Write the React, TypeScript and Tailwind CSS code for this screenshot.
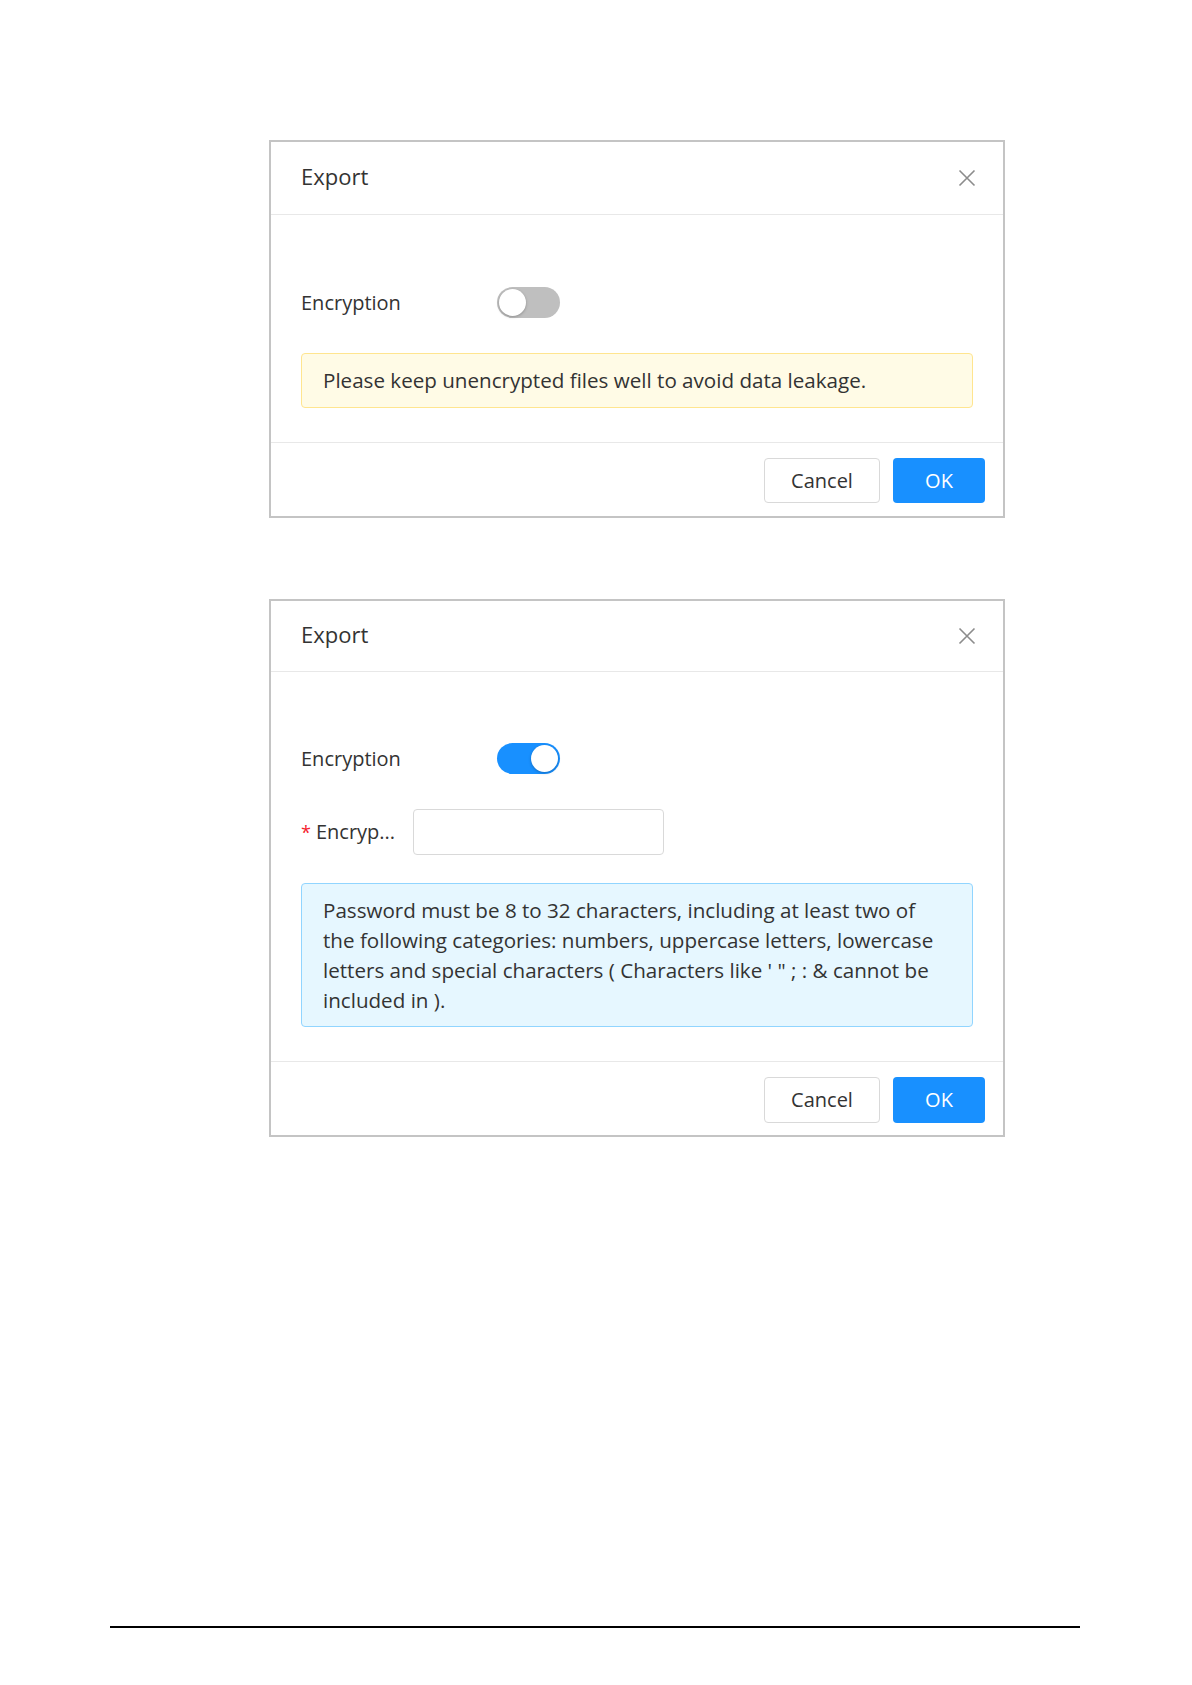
import { ReactNode } from "react";

const CloseIcon = () => (
  <svg width="18" height="18" viewBox="0 0 18 18" fill="none">
    <path d="M1.5 1.5L16.5 16.5M16.5 1.5L1.5 16.5" stroke="#8c8c8c" strokeWidth="1.6" />
  </svg>
);

function Toggle({ on }: { on?: boolean }) {
  return (
    <div
      className={`flex h-[31px] w-[63px] items-center rounded-full p-[2px] ${
        on ? "justify-end bg-[#1890ff]" : "justify-start bg-[#bfbfbf]"
      }`}
    >
      <span className="h-[27px] w-[27px] rounded-full bg-white shadow-[0_1px_3px_rgba(0,0,0,0.25)]" />
    </div>
  );
}

function Footer({ className }: { className: string }) {
  return (
    <div className={`flex justify-end gap-[13px] border-t border-[#e8e8e8] pr-[18px] ${className}`}>
      <button className="h-full w-[116px] rounded-[4px] border border-[#d9d9d9] bg-white text-[20px] text-[#333]">
        Cancel
      </button>
      <button className="h-full w-[92px] rounded-[4px] bg-[#1890ff] text-[20px] text-white">
        OK
      </button>
    </div>
  );
}

function Dialog({
  headerClass,
  children,
}: {
  headerClass: string;
  children: ReactNode;
}) {
  return (
    <div className="w-[736px] border-2 border-[#c4c4c4] bg-white">
      <div
        className={`flex items-center justify-between border-b border-[#e8e8e8] pl-[30px] pr-[27px] ${headerClass}`}
      >
        <span className="pb-[4px] text-[22px] text-[#333]">Export</span>
        <CloseIcon />
      </div>
      {children}
    </div>
  );
}

export default function App() {
  return (
    <div className="flex min-h-[1685px] w-full flex-col bg-white pt-[140px] font-['Open_Sans',sans-serif] text-[#333]">
      <div className="ml-[269px]">
        <Dialog headerClass="h-[73px]">
          <div className="px-[30px] pt-[72px] pb-[34px]">
            <div className="flex h-[31px] items-center">
              <span className="w-[196px] text-[20px]">Encryption</span>
              <Toggle />
            </div>
            <div className="mt-[35px] flex h-[55px] items-center rounded-[4px] border border-[#ffe58f] bg-[#fffbe6] px-[21px] text-[20.6px]">
              Please keep unencrypted files well to avoid data leakage.
            </div>
          </div>
          <Footer className="h-[74px] pt-[15px] pb-[13px]" />
        </Dialog>
      </div>

      <div className="ml-[269px] mt-[81px]">
        <Dialog headerClass="h-[71px]">
          <div className="px-[30px] pt-[71px] pb-[34px]">
            <div className="flex h-[31px] items-center">
              <span className="w-[196px] text-[20px]">Encryption</span>
              <Toggle on />
            </div>
            <div className="mt-[35px] flex h-[46px] items-center">
              <span className="flex w-[112px] items-center text-[20px]">
                <span className="mr-[5px] text-[18px] text-[#f5222d]">*</span>
                <span>Encryp...</span>
              </span>
              <input className="h-[46px] w-[251px] rounded-[4px] border border-[#d9d9d9] bg-white outline-none" />
            </div>
            <div className="mt-[28px] rounded-[4px] border border-[#91d5ff] bg-[#e6f7ff] px-[21px] py-[11px] text-[20.6px] leading-[30px] whitespace-nowrap">
              Password must be 8 to 32 characters, including at least two of
              <br />
              the following categories: numbers, uppercase letters, lowercase
              <br />
              letters and special characters ( Characters like ' " ; : &amp; cannot be
              <br />
              included in ).
            </div>
          </div>
          <Footer className="h-[74px] pt-[15px] pb-[12px]" />
        </Dialog>
      </div>

      <div className="ml-[110px] mt-[489px] h-[2px] w-[970px] bg-black" />
    </div>
  );
}
